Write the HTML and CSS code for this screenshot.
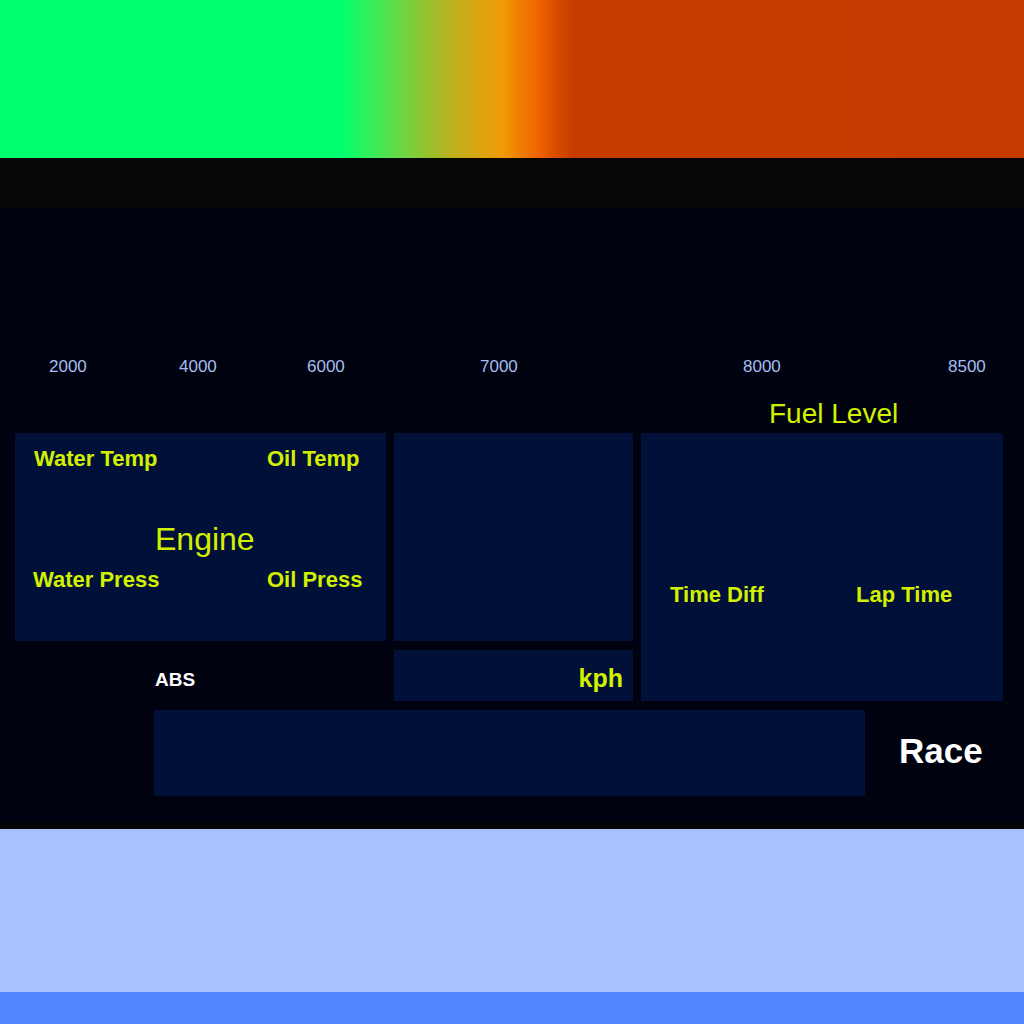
FILE: index.html
```html
<!DOCTYPE html>
<html lang="en">
<head>
<meta charset="utf-8">
<title>Dashboard</title>
<link rel="stylesheet" href="styles.css">
</head>
<body>
<div class="page">
  <div class="rpm-bar"></div>
  <div class="band"></div>
  <main class="main">
    <div class="scale">
      <span class="tick" style="left:49px">2000</span>
      <span class="tick" style="left:179px">4000</span>
      <span class="tick" style="left:307px">6000</span>
      <span class="tick" style="left:480px">7000</span>
      <span class="tick" style="left:743px">8000</span>
      <span class="tick" style="left:948px">8500</span>
    </div>
    <div class="fuel-row"><span class="fuel">Fuel Level</span></div>
    <div class="dash">
      <section class="panel engine">
        <div class="pair pair-top"><span>Water Temp</span><span>Oil Temp</span></div>
        <div class="engine-title">Engine</div>
        <div class="pair pair-bottom"><span>Water Press</span><span>Oil Press</span></div>
      </section>
      <section class="panel middle"></section>
      <section class="panel timing">
        <div class="pair timing-pair"><span>Time Diff</span><span>Lap Time</span></div>
      </section>
      <div class="abs">ABS</div>
      <section class="panel speed"><span class="kph">kph</span></section>
      <section class="panel bottom-bar"></section>
      <div class="race">Race</div>
    </div>
  </main>
  <div class="strip"></div>
  <div class="light"></div>
  <div class="footer"></div>
</div>
</body>
</html>
```
FILE: styles.css
```css
* { box-sizing: border-box; }
html, body { margin: 0; padding: 0; }
body {
  width: 1024px;
  height: 1024px;
  overflow: hidden;
  background: #00030f;
  font-family: "Liberation Sans", Arial, sans-serif;
}
.page { display: flex; flex-direction: column; width: 1024px; }

.rpm-bar {
  height: 158px;
  background: linear-gradient(to right,
    #00ff6e 0px, #00ff6e 342px, #2cf25e 365px, #5ade4c 392px,
    #92c430 425px, #bcb01e 452px, #dea410 482px, #ef9c06 502px,
    #f07a00 522px, #f06200 540px, #d64a00 557px, #c63c00 574px,
    #c43a00 1024px);
}
.band { height: 50px; background: #060704; }

.main {
  height: 615px;
  padding-top: 143px;
  background: #00030f;
  display: flex;
  flex-direction: column;
}
.scale { position: relative; height: 32px; }
.tick {
  position: absolute;
  top: 0;
  font-size: 17px;
  line-height: 32px;
  color: #a6bdf0;
}
.fuel-row {
  height: 50px;
  display: flex;
  align-items: flex-end;
  padding-left: 769px;
  padding-bottom: 5px;
}
.fuel { font-size: 28px; line-height: 28px; color: #d2f000; }

.dash {
  margin-left: 15px;
  display: grid;
  grid-template-columns: 139px 232px 8px 239px 8px 224px 138px;
  grid-template-rows: 208px 9px 51px 9px 86px;
}
.panel { background: #001038; }

.pair {
  display: grid;
  font-size: 22px;
  line-height: 22px;
  font-weight: bold;
  color: #d2f000;
}
.engine { grid-column: 1 / 3; grid-row: 1; display: flex; flex-direction: column; }
.pair-top { margin-top: 15px; padding-left: 19px; grid-template-columns: 233px auto; }
.engine-title {
  margin-top: 53px;
  padding-left: 140px;
  font-size: 32px;
  line-height: 32px;
  color: #d2f000;
}
.pair-bottom { margin-top: 14px; padding-left: 18px; grid-template-columns: 234px auto; }

.middle { grid-column: 4; grid-row: 1; }
.timing { grid-column: 6 / 8; grid-row: 1 / 4; padding-top: 151px; padding-left: 29px; }
.timing-pair { grid-template-columns: 186px auto; }

.abs {
  grid-column: 2;
  grid-row: 3;
  padding-top: 20px;
  padding-left: 1px;
  font-size: 19px;
  line-height: 19px;
  font-weight: bold;
  color: #ffffff;
}
.speed {
  grid-column: 4;
  grid-row: 3;
  display: flex;
  justify-content: flex-end;
  padding-top: 16px;
  padding-right: 10px;
}
.kph { font-size: 25px; line-height: 25px; font-weight: bold; color: #d2f000; }

.bottom-bar { grid-column: 2 / 7; grid-row: 5; }
.race {
  grid-column: 7;
  grid-row: 5;
  padding-top: 23px;
  padding-left: 34px;
  font-size: 35px;
  line-height: 35px;
  font-weight: bold;
  color: #ffffff;
}

.strip { height: 6px; background: #050604; }
.light { height: 163px; background: #a9c1ff; }
.footer { height: 32px; background: #5288ff; }
```
